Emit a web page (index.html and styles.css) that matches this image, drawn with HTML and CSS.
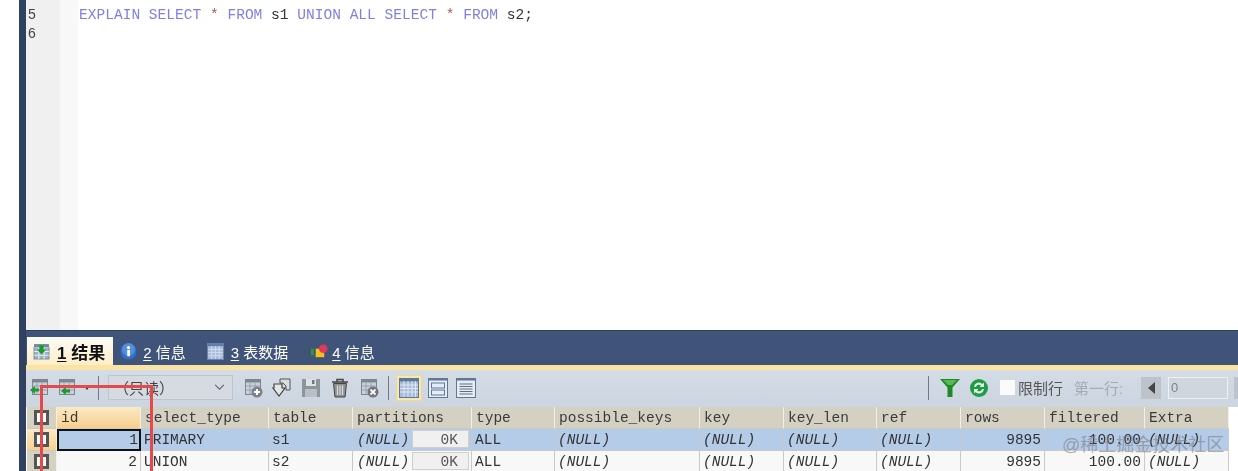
FILE: index.html
```html
<!DOCTYPE html>
<html lang="en">
<head>
    <meta charset="UTF-8">
    <meta name="viewport" content="width=device-width, initial-scale=1.0">
    <title>SQLyog</title>
    <link rel="stylesheet" href="styles.css">
</head>
<body>
    <div class="app">
        <div class="side-strip"></div>
        <div class="main">
            <div class="editor">
                <div class="gutter"><div>5</div><div>6</div></div>
                <div class="fold"></div>
                <div class="code"><span class="kw">EXPLAIN SELECT</span> <span class="op">*</span> <span class="kw">FROM</span> s1 <span class="kw">UNION ALL SELECT</span> <span class="op">*</span> <span class="kw">FROM</span> s2;</div>
            </div>

            <div class="tabs">
                <div class="tab active">
                    <svg class="tab-icon" viewBox="0 0 16 16"><rect x="1" y="4" width="14" height="11" fill="#9db4c8" stroke="#7a8a9a"/><path d="M1 4h14M1 8h14M1 11.500h14M5.500 4v11M10.500 4v11" stroke="#e4eaf0"/><rect x="1" y="1" width="14" height="3" fill="#6f8aa0"/><path d="M6 2h4v4h2.500L8 10.500 3.500 6H6z" fill="#1c9a2c"/></svg>
                    <span><u>1</u> 结果</span>
                </div>
                <div class="tab">
                    <svg class="tab-icon" viewBox="0 0 16 16"><circle cx="8" cy="8" r="7.500" fill="#2f6fd0"/><circle cx="8" cy="6" r="6" fill="#6fa4ea" opacity=".6"/><rect x="6.800" y="6.500" width="2.600" height="6" fill="#fff"/><circle cx="8" cy="4.300" r="1.500" fill="#fff"/></svg>
                    <span><u>2</u> 信息</span>
                </div>
                <div class="tab data">
                    <svg class="tab-icon" viewBox="0 0 16 16"><rect x=".5" y=".5" width="15" height="15" fill="#a9bcdd" stroke="#6d86a8"/><rect x=".5" y=".5" width="15" height="2.500" fill="#5f7ea8"/><path d="M1 6h14M1 9h14M1 12h14M4.500 3v12M8 3v12M11.500 3v12" stroke="#d5dfee" stroke-width=".8"/></svg>
                    <span><u>3</u> 表数据</span>
                </div>
                <div class="tab last">
                    <svg class="tab-icon" viewBox="0 0 18 16"><rect x="0" y="5" width="3" height="7" fill="#2d9a3a"/><rect x="5" y="5" width="9" height="9" fill="#f2c21a"/><circle cx="13" cy="5" r="4.500" fill="#e0385a"/></svg>
                    <span><u>4</u> 信息</span>
                </div>
            </div>
            <div class="tab-line"></div>

            <div class="toolbar">
                <svg class="tool first" viewBox="0 0 20 20"><use href="#grid-sm"/><path d="M0 12l5-4v2.500h4v3H5V16z" fill="#1c9a2c"/></svg>
                <svg class="tool second" viewBox="0 0 22 20"><use href="#grid-sm"/><path d="M4 13l5-4v2.500h4v3H9V17z" fill="#1c9a2c"/></svg>
                <span class="caret"></span>
                <span class="sep"></span>
                <div class="select">
                    <span>（只读）</span>
                    <svg viewBox="0 0 12 8" class="chev"><path d="M1 1l5 5 5-5" fill="none" stroke="#667" stroke-width="1.300"/></svg>
                </div>
                <div class="tool-group">
                    <svg class="tool" viewBox="0 0 20 20"><use href="#grid-sm"/><circle cx="14" cy="14" r="5.500" fill="#7c8288"/><path d="M14 11v6M11 14h6" stroke="#fff" stroke-width="2"/></svg>
                    <svg class="tool" viewBox="0 0 20 20"><path d="M8 1h10v11h-4V8l-3-3H8z" fill="#d9dde0" stroke="#555"/><path d="M2 6h8v4h3l-6 8-6-8h1z" fill="#e4e6e8" stroke="#444" stroke-width="1.200"/></svg>
                    <svg class="tool" viewBox="0 0 20 20"><path d="M1 1h18v18H1z" fill="#8d949c"/><rect x="5" y="1" width="10" height="7" fill="#dfe3e6"/><rect x="11" y="2" width="2.500" height="4" fill="#70777e"/><rect x="4" y="11" width="12" height="8" fill="#b9bfc5"/></svg>
                    <svg class="tool" viewBox="0 0 20 20"><path d="M2 4h16M7 4V1.500h6V4" fill="none" stroke="#444" stroke-width="1.500"/><path d="M3.500 5.500h13L15 19H5z" fill="#8e9296" stroke="#444"/><path d="M7.500 7.500v9.500M10 7.500v9.500M12.500 7.500v9.500" stroke="#ddd" stroke-width="1.200"/></svg>
                    <svg class="tool" viewBox="0 0 20 20"><use href="#grid-sm"/><circle cx="14" cy="14" r="5.500" fill="#6f757b"/><path d="M11.500 11.500l5 5M16.500 11.500l-5 5" stroke="#fff" stroke-width="1.800"/></svg>
                </div>
                <span class="sep"></span>
                <div class="view-btn on">
                    <svg class="view" viewBox="0 0 20 20"><rect x=".5" y=".5" width="19" height="19" fill="#a7bcdd" stroke="#5f7898"/><rect x=".5" y=".5" width="19" height="3" fill="#5f7898"/><path d="M1 7h18M1 10.500h18M1 14h18M5 3v16M9 3v16M13 3v16M16.500 3v16" stroke="#e4ebf5" stroke-width=".9"/></svg>
                </div>
                <svg class="view" viewBox="0 0 20 20"><rect x=".5" y=".5" width="19" height="19" fill="#e6ecf3" stroke="#5f7898"/><rect x=".5" y=".5" width="19" height="2" fill="#5f7898"/><rect x="3.500" y="5" width="13" height="5" fill="#e6ecf3" stroke="#5f7898"/><rect x="3.500" y="12" width="13" height="5" fill="#e6ecf3" stroke="#5f7898"/></svg>
                <svg class="view" viewBox="0 0 20 20"><rect x=".5" y=".5" width="19" height="19" fill="#e6ecf3" stroke="#5f7898"/><rect x=".5" y=".5" width="19" height="2" fill="#5f7898"/><path d="M3.500 6h13M3.500 8.500h13M3.500 11h13M3.500 13.500h13M3.500 16h13" stroke="#5f6f80"/></svg>

                <div class="toolbar-right">
                    <span class="sep"></span>
                    <svg class="funnel" viewBox="0 0 20 18"><path d="M0 0h20l-7.500 8.500V18h-5V8.500z" fill="#1e8a25"/><path d="M3 1h14l-5 5H8z" fill="#58b85a"/></svg>
                    <svg class="refresh" viewBox="0 0 18 18"><circle cx="9" cy="9" r="9" fill="#1f9a45"/><path d="M4 8a5 5 0 0 1 8.500-3L14 3.500V8H9.500L11 6.500A3 3 0 0 0 6 8zM14 10a5 5 0 0 1-8.500 3L4 14.500V10h4.500L7 11.500A3 3 0 0 0 12 10z" fill="#dff3e3"/></svg>
                    <span class="limit-box"></span>
                    <span class="limit-label">限制行</span>
                    <span class="first-label">第一行:</span>
                    <span class="pager-btn"><i></i></span>
                    <span class="pager-input">0</span>
                    <span class="pager-btn next"></span>
                </div>
            </div>

            <div class="results">
                <div class="row">
                    <div class="cell head mark"><span class="box"></span></div>
                    <div class="cell head sorted">id</div>
                    <div class="cell head">select_type</div>
                    <div class="cell head">table</div>
                    <div class="cell head">partitions</div>
                    <div class="cell head">type</div>
                    <div class="cell head">possible_keys</div>
                    <div class="cell head">key</div>
                    <div class="cell head">key_len</div>
                    <div class="cell head">ref</div>
                    <div class="cell head">rows</div>
                    <div class="cell head">filtered</div>
                    <div class="cell head">Extra</div>
                </div>
                <div class="row selected">
                    <div class="cell mark current"><span class="box"></span></div>
                    <div class="cell num focus">1</div>
                    <div class="cell">PRIMARY</div>
                    <div class="cell">s1</div>
                    <div class="cell split"><em>(NULL)</em><span class="blob">0K</span></div>
                    <div class="cell">ALL</div>
                    <div class="cell"><em>(NULL)</em></div>
                    <div class="cell"><em>(NULL)</em></div>
                    <div class="cell"><em>(NULL)</em></div>
                    <div class="cell"><em>(NULL)</em></div>
                    <div class="cell num">9895</div>
                    <div class="cell num">100.00</div>
                    <div class="cell"><em>(NULL)</em></div>
                </div>
                <div class="row">
                    <div class="cell mark"><span class="box"></span></div>
                    <div class="cell num">2</div>
                    <div class="cell">UNION</div>
                    <div class="cell">s2</div>
                    <div class="cell split"><em>(NULL)</em><span class="blob">0K</span></div>
                    <div class="cell">ALL</div>
                    <div class="cell"><em>(NULL)</em></div>
                    <div class="cell"><em>(NULL)</em></div>
                    <div class="cell"><em>(NULL)</em></div>
                    <div class="cell"><em>(NULL)</em></div>
                    <div class="cell num">9895</div>
                    <div class="cell num">100.00</div>
                    <div class="cell"><em>(NULL)</em></div>
                </div>
            </div>
        </div>
    </div>

    <div class="red-box"></div>
    <div class="watermark">@稀土掘金技术社区</div>

    <svg width="0" height="0" class="defs">
        <defs>
            <g id="grid-sm">
                <rect x="2.500" y="1.500" width="15" height="15" fill="#c9d2dc" stroke="#7d8790"/>
                <rect x="2.500" y="1.500" width="15" height="3" fill="#7d8790"/>
                <path d="M3 8h14M3 12h14M7 5v11M12 5v11" stroke="#8e98a2" stroke-width=".8"/>
            </g>
        </defs>
    </svg>
</body>
</html>
```

FILE: styles.css
```css
body {
    margin: 0;
    height: 100vh;
    overflow: hidden;
    background-color: #fff;
    position: relative;
    font-family: "Liberation Mono", monospace;
    font-size: 14.5px;
    color: #333;
}

.defs {
    position: absolute;
}

.app {
    display: flex;
    height: 471px;
    padding-left: 19px;
    filter: blur(0.35px);
}

.side-strip {
    width: 7px;
    flex: none;
    background-color: #2f4060;
}

.main {
    flex: 1;
    min-width: 0;
    display: flex;
    flex-direction: column;
}

.editor {
    flex: 1;
    display: flex;
    min-height: 0;
    background-color: #fff;
}

.gutter {
    width: 34px;
    flex: none;
    padding: 5px 0 0 2px;
    box-sizing: border-box;
    background-color: #f0f0f0;
    font-family: "Liberation Sans", sans-serif;
    font-size: 14px;
    line-height: 19px;
    color: #444;
}

.fold {
    width: 18px;
    flex: none;
    background-color: #f8f8f8;
}

.code {
    padding: 6px 0 0 1px;
    font-size: 14.56px;
    line-height: 18px;
    white-space: pre;
}

.kw {
    color: #7f7fe8;
}

.op {
    color: #b05050;
}

.tabs {
    height: 35px;
    flex: none;
    box-sizing: border-box;
    padding: 6px 0 0 1px;
    display: flex;
    align-items: stretch;
    background-color: #40547a;
    border-top: 1px solid #2f4060;
    font-family: "Liberation Sans", "Noto Sans CJK SC", sans-serif;
    font-size: 15px;
    color: #fff;
}

.tab {
    display: flex;
    align-items: center;
    gap: 6px;
    padding: 0 13px 0 7px;
}

.tab u {
    text-underline-offset: 2px;
}

.tab-icon {
    width: 17px;
    height: 17px;
}

.tab.active {
    background: linear-gradient(#fbfbf5, #fdeec8);
    color: #111;
    font-weight: bold;
    font-size: 17px;
    padding: 0 8px 0 6px;
    gap: 7px;
}

.tab.data {
    margin-left: 1px;
    gap: 7px;
}

.tab.last {
    margin-left: 3px;
    gap: 4px;
}

.tab-line {
    height: 5px;
    flex: none;
    background-color: #fbe3a4;
}

.toolbar {
    height: 35px;
    flex: none;
    display: flex;
    align-items: center;
    box-sizing: border-box;
    padding-left: 4px;
    background: linear-gradient(#d4dce6, #ccd5e0);
    font-family: "Liberation Sans", "Noto Sans CJK SC", sans-serif;
}

.tool {
    width: 20px;
    height: 20px;
    flex: none;
}

.tool.second {
    width: 22px;
    margin-left: 7px;
}

.caret {
    margin-left: 5px;
    border-left: 3px solid transparent;
    border-right: 3px solid transparent;
    border-top: 4px solid #333;
}

.sep {
    width: 1px;
    height: 24px;
    flex: none;
    background-color: #6f7a86;
}

.caret + .sep {
    margin-left: 8px;
}

.select {
    width: 125px;
    height: 25px;
    margin: 0 10px 0 9px;
    flex: none;
    box-sizing: border-box;
    display: flex;
    align-items: center;
    justify-content: space-between;
    padding: 0 7px 0 5px;
    background-color: #d6dbe2;
    border: 1px solid #bcc4cc;
    font-size: 15px;
    color: #444;
}

.chev {
    width: 11px;
    height: 7px;
}

.tool-group {
    display: flex;
    gap: 9px;
    margin-right: 9px;
}

.view-btn.on {
    width: 26px;
    height: 26px;
    margin-left: 7px;
    display: flex;
    align-items: center;
    justify-content: center;
    box-sizing: border-box;
    background-color: #f5e7b8;
    border: 1px solid #f2d98a;
}

.view {
    width: 20px;
    height: 20px;
    flex: none;
}

.view-btn + .view {
    margin-left: 6px;
}

.view + .view {
    margin-left: 8px;
}

.toolbar-right {
    margin-left: auto;
    display: flex;
    align-items: center;
}

.funnel {
    width: 20px;
    height: 18px;
    margin-left: 11px;
}

.refresh {
    width: 18px;
    height: 18px;
    margin-left: 10px;
}

.limit-box {
    width: 15px;
    height: 15px;
    margin-left: 12px;
    background-color: #fbfbfb;
}

.limit-label {
    margin-left: 3px;
    width: 46px;
    font-size: 15px;
    color: #555;
}

.first-label {
    margin-left: 10px;
    width: 67px;
    font-size: 15px;
    color: #a4abb3;
}

.pager-btn {
    width: 20px;
    height: 22px;
    flex: none;
    display: flex;
    align-items: center;
    justify-content: center;
    background-color: #bcc3cb;
}

.pager-btn i {
    border-top: 6px solid transparent;
    border-bottom: 6px solid transparent;
    border-right: 7px solid #444;
}

.pager-input {
    width: 60px;
    height: 22px;
    margin-left: 7px;
    flex: none;
    box-sizing: border-box;
    padding-left: 2px;
    background-color: #d0d6dd;
    border: 1px solid #eef0f2;
    font-size: 13px;
    line-height: 20px;
    color: #7c8288;
}

.pager-btn.next {
    margin-left: 6px;
    width: 4px;
}

.results {
    height: 66px;
    flex: none;
    overflow: hidden;
    background: linear-gradient(#ccd5e0 2px, #fff 2px);
    padding: 2px 0 0 1px;
    box-sizing: border-box;
}

.row {
    display: grid;
    grid-template-columns: 30px 84px 128px 84px 119px 83px 145px 84px 93px 84px 84px 100px 84px;
    height: 22px;
}

.cell {
    box-sizing: border-box;
    padding: 0 3px;
    height: 22px;
    line-height: 23px;
    white-space: nowrap;
    overflow: hidden;
    border-right: 1px solid #c9c9c9;
    border-bottom: 1px solid #c9c9c9;
    background-color: #f8f8f8;
}

.head {
    background-color: #d5d1c2;
    border-right-color: #f0f0ea;
    padding-left: 4px;
    color: #3a3a3a;
}

.sorted {
    background: linear-gradient(#fbe9c6, #f8cf8c);
}

.selected .cell {
    background-color: #b5cce9;
}

.num {
    text-align: right;
}

.cell em {
    font-style: italic;
}

.split {
    display: flex;
    justify-content: space-between;
    padding-left: 4px;
    padding-right: 2px;
}

.blob {
    width: 57px;
    height: 18px;
    margin-top: 1px;
    box-sizing: border-box;
    padding-right: 10px;
    text-align: right;
    line-height: 19px;
    background-color: #f0f0f0;
    border: 1px solid #cfcfcf;
    color: #555;
}

.mark {
    display: flex;
    align-items: center;
    justify-content: center;
    padding: 0;
    background-color: #d5d1c2;
    border-right-color: #f0f0ea;
}

.selected .current {
    background: linear-gradient(#fbe9c6, #f8cf8c);
}

.box {
    width: 9px;
    height: 9px;
    background-color: #fbfbf8;
    border: 3px solid #555;
}

.selected .focus {
    border: 2px solid #111;
    line-height: 19px;
    padding-right: 1px;
}

.red-box {
    position: absolute;
    left: 40px;
    top: 385px;
    width: 107px;
    height: 100px;
    border: 3px solid #e5484d;
}

.watermark {
    position: absolute;
    left: 1062px;
    top: 430px;
    font-family: "Liberation Sans", "Noto Sans CJK SC", sans-serif;
    font-size: 18px;
    color: rgba(120, 125, 135, 0.6);
}
```
